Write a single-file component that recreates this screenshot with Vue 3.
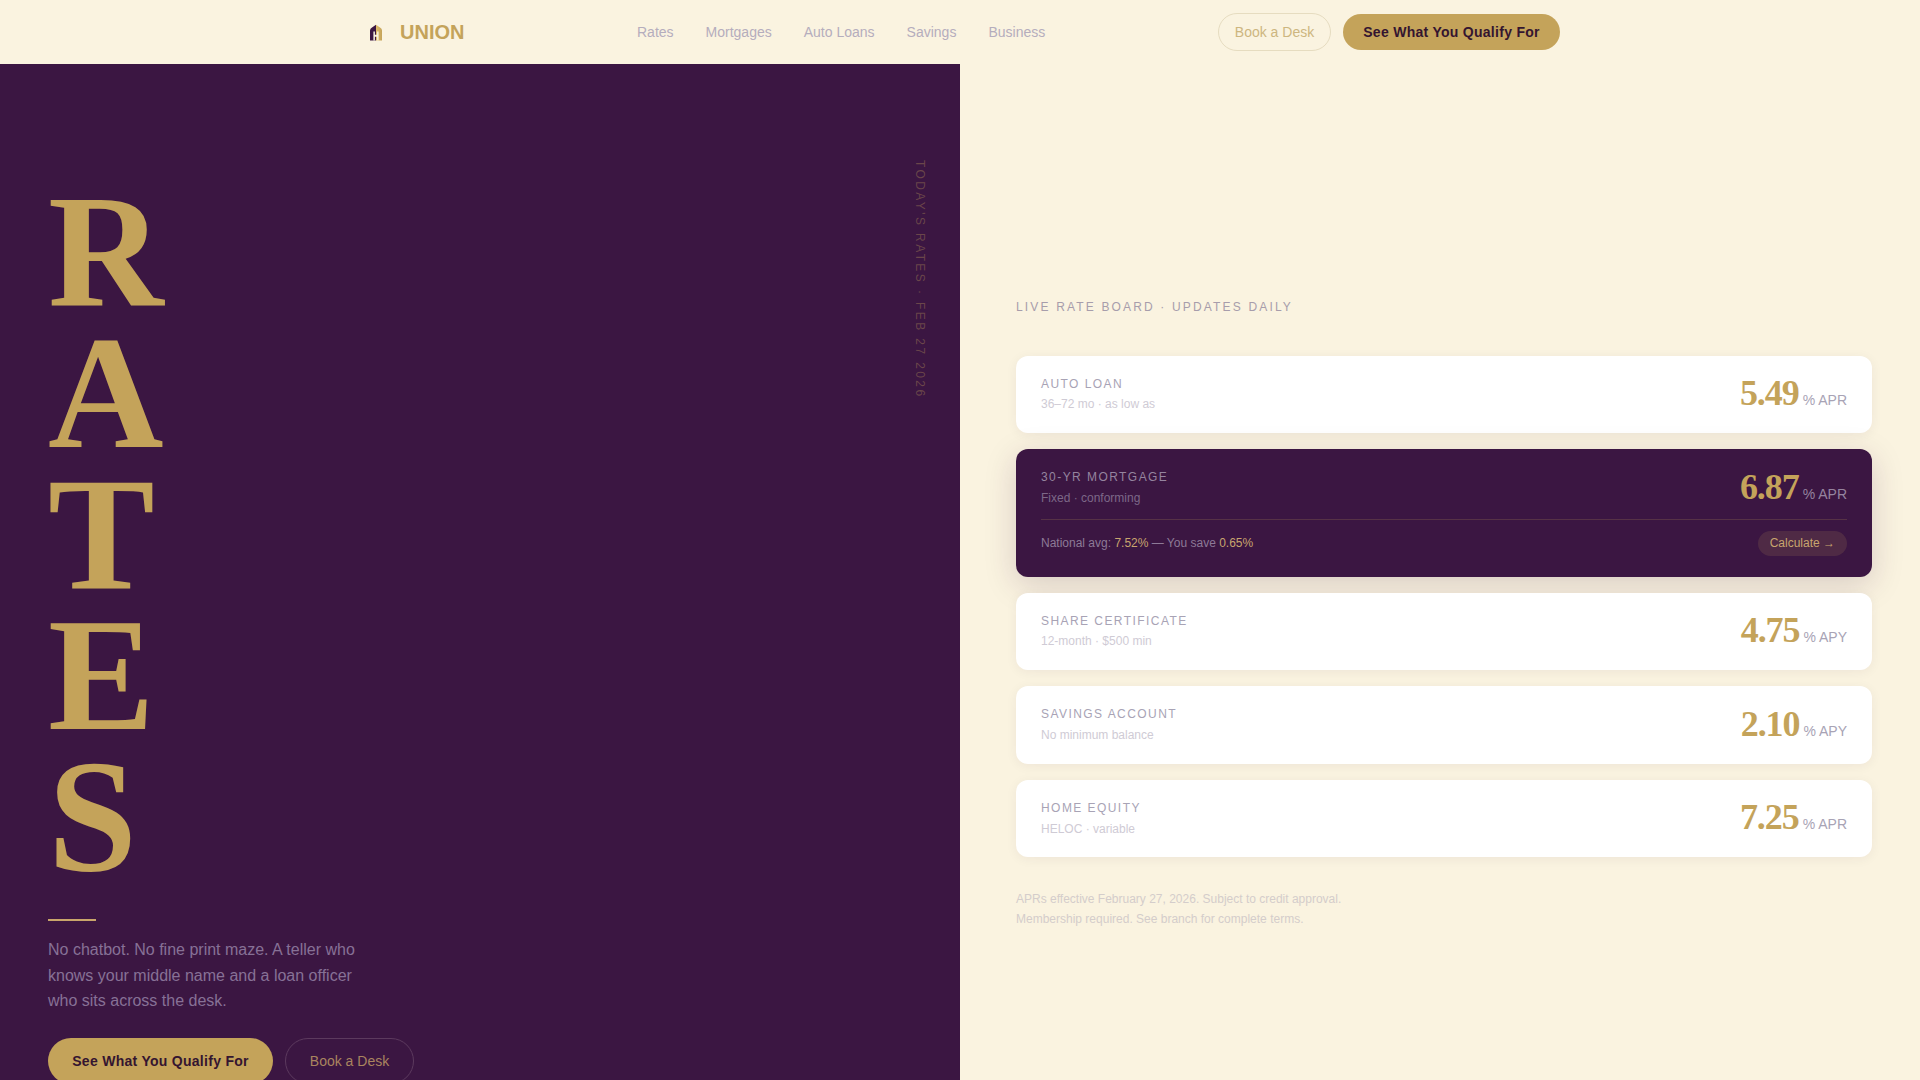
<script setup>
const links = ['Rates', 'Mortgages', 'Auto Loans', 'Savings', 'Business']
const rates = [
  { name: 'AUTO LOAN', sub: '36–72 mo · as low as', val: '5.49', unit: '% APR' },
  { name: '30-YR MORTGAGE', sub: 'Fixed · conforming', val: '6.87', unit: '% APR', featured: true },
  { name: 'SHARE CERTIFICATE', sub: '12-month · $500 min', val: '4.75', unit: '% APY' },
  { name: 'SAVINGS ACCOUNT', sub: 'No minimum balance', val: '2.10', unit: '% APY' },
  { name: 'HOME EQUITY', sub: 'HELOC · variable', val: '7.25', unit: '% APR' },
]
const letters = ['R', 'A', 'T', 'E', 'S']
</script>

<template>
  <div class="page">
    <header class="topbar">
      <div class="topbar-inner">
        <a class="logo">
          <span class="logo-box">
            <svg width="14" height="17" viewBox="0 0 14 17">
              <defs>
                <linearGradient id="lg" x1="0" x2="1" y1="0" y2="0">
                  <stop offset="0" stop-color="#3b1642" />
                  <stop offset="0.5" stop-color="#3b1642" />
                  <stop offset="0.5" stop-color="#e0bd6a" />
                  <stop offset="1" stop-color="#c4a35a" />
                </linearGradient>
              </defs>
              <path d="M1 16.500V6.500Q1 4.500 3 3.500L7 .8l4 2.700Q13 4.500 13 6.500V16.500Z" fill="url(#lg)" />
              <path d="M4.400 16.500V7.500h1.500v3.300h2.200V7.500h1.500v9H8.100v-3.800H5.900v3.800Z" fill="#fbf3e0" />
            </svg>
          </span>
          <span class="logo-text">UNION</span>
        </a>
        <nav class="links">
          <a v-for="l in links" :key="l">{{ l }}</a>
        </nav>
        <div class="actions">
          <button class="btn ghost-top">Book a Desk</button>
          <button class="btn primary-top">See What You Qualify For</button>
        </div>
      </div>
    </header>

    <main class="main">
      <section class="left">
        <div class="vertical">TODAY'S RATES · FEB 27 2026</div>
        <h1 class="headline">
          <span v-for="c in letters" :key="c">{{ c }}</span>
        </h1>
        <div class="rule"></div>
        <p class="lede">No chatbot. No fine print maze. A teller who knows your middle name and a loan officer who sits across the desk.</p>
        <div class="cta">
          <button class="btn primary">See What You Qualify For</button>
          <button class="btn ghost">Book a Desk</button>
        </div>
      </section>

      <section class="right">
        <div class="eyebrow">LIVE RATE BOARD · UPDATES DAILY</div>
        <div class="cards">
          <article v-for="r in rates" :key="r.name" class="card" :class="{ featured: r.featured }">
            <div class="row">
              <div>
                <div class="name">{{ r.name }}</div>
                <div class="sub">{{ r.sub }}</div>
              </div>
              <div class="rate">
                <span class="val">{{ r.val }}</span>
                <span class="unit">{{ r.unit }}</span>
              </div>
            </div>
            <div v-if="r.featured" class="extra">
              <span>National avg: <b>7.52%</b> — You save <b>0.65%</b></span>
              <button class="calc">Calculate →</button>
            </div>
          </article>
        </div>
        <p class="foot">APRs effective February 27, 2026. Subject to credit approval.<br />Membership required. See branch for complete terms.</p>
      </section>
    </main>
  </div>
</template>

<style>
html, body { margin: 0; background: #faf3e0; overflow: hidden; }
</style>

<style scoped>
.page {
  height: 1080px;
  overflow: hidden;
  background: #faf3e0;
  font-family: "Liberation Sans", Arial, sans-serif;
}
.topbar { height: 64px; display: flex; justify-content: center; background: #faf3e0; }
.topbar-inner { width: 1200px; display: flex; align-items: center; }
.logo { display: flex; align-items: center; gap: 8px; width: 277px; }
.logo-box { width: 32px; height: 32px; display: flex; align-items: center; justify-content: center; }
.logo-text { font-size: 20px; font-weight: 700; color: #c4a35a; }
.links { display: flex; gap: 32px; font-size: 14px; color: #b5adbd; }
.actions { margin-left: auto; display: flex; align-items: center; gap: 12px; }
.btn { font-family: inherit; font-size: 14px; border-radius: 999px; cursor: pointer; }
.ghost-top {
  height: 38px; width: 113px; padding: 0; background: transparent;
  border: 1.5px solid #e6dcc0; color: #cdb67f;
}
.primary-top {
  height: 36px; width: 217px; padding: 0; border: 0; background: #c4a35a;
  color: #341530; font-weight: 700; letter-spacing: 0.02em;
}
.main { display: flex; align-items: stretch; }
.left {
  position: relative;
  width: 960px;
  height: 1016px;
  box-sizing: border-box;
  padding: 118px 0 0 48px;
  background: #3b1642;
}
.vertical {
  position: absolute;
  top: 96px;
  right: 33px;
  writing-mode: vertical-rl;
  font-size: 12px;
  letter-spacing: 0.2em;
  color: rgba(196, 163, 90, 0.35);
}
.headline {
  margin: 0;
  display: flex;
  flex-direction: column;
  font-family: "Liberation Serif", "Times New Roman", serif;
  font-weight: 700;
  font-size: 160px;
  line-height: 141px;
  color: #c4a35a;
}
.rule { width: 48px; height: 2px; margin-top: 32px; background: #c9a66b; }
.lede {
  margin: 16px 0 0;
  width: 320px;
  font-size: 16px;
  line-height: 25.600px;
  color: #877196;
}
.cta { display: flex; gap: 12px; margin-top: 24.500px; }
.primary {
  height: 46px; width: 225px; padding: 0; border: 0; background: #c4a35a;
  color: #341530; font-weight: 700; letter-spacing: 0.02em;
}
.ghost {
  height: 46px; width: 129px; padding: 0; background: transparent;
  border: 1px solid #5c3a5e; color: #a9845f;
}
.right { flex: 1; box-sizing: border-box; padding: 234.700px 48px 0 56px; }
.eyebrow { font-size: 12px; letter-spacing: 0.18em; color: #a79dab; line-height: 16px; }
.cards { display: flex; flex-direction: column; gap: 16px; margin-top: 40.900px; }
.card {
  background: #fff;
  border-radius: 12px;
  padding: 20px 25px;
  box-shadow: 0 2px 12px rgba(59, 22, 66, 0.06);
}
.row { display: flex; justify-content: space-between; align-items: center; }
.name { font-size: 12px; letter-spacing: 0.12em; color: #a8a3b5; line-height: 16.800px; }
.sub { font-size: 12px; color: #cfcbd5; line-height: 16.800px; margin-top: 4px; }
.rate { display: flex; align-items: baseline; gap: 4px; margin-top: -2.500px; }
.val {
  font-family: "Liberation Serif", "Times New Roman", serif;
  font-weight: 700;
  font-size: 36px;
  line-height: 36px;
  letter-spacing: -0.03em;
  color: #c4a35a;
}
.unit { font-size: 14px; color: #a8a3b5; }
.featured { background: #3b1642; box-shadow: 0 8px 32px rgba(59, 22, 66, 0.18); padding-bottom: 21px; }
.featured .name { color: #95849f; }
.featured .sub { color: #7d6888; }
.featured .unit { color: #95849f; }
.extra {
  display: flex;
  justify-content: space-between;
  align-items: center;
  margin-top: 12px;
  padding-top: 11px;
  border-top: 1px solid rgba(196, 163, 90, 0.2);
  font-size: 12px;
  color: #8d7a97;
}
.extra b { font-weight: 400; color: #c8a56e; }
.calc {
  height: 24.800px;
  padding: 0 12px;
  border: 0;
  border-radius: 999px;
  background: rgba(196, 163, 90, 0.15);
  color: #c8a56e;
  font-family: inherit;
  font-size: 12px;
}
.foot { margin: 32px 0 0; font-size: 12px; line-height: 20px; color: #d4cdcb; }
</style>
